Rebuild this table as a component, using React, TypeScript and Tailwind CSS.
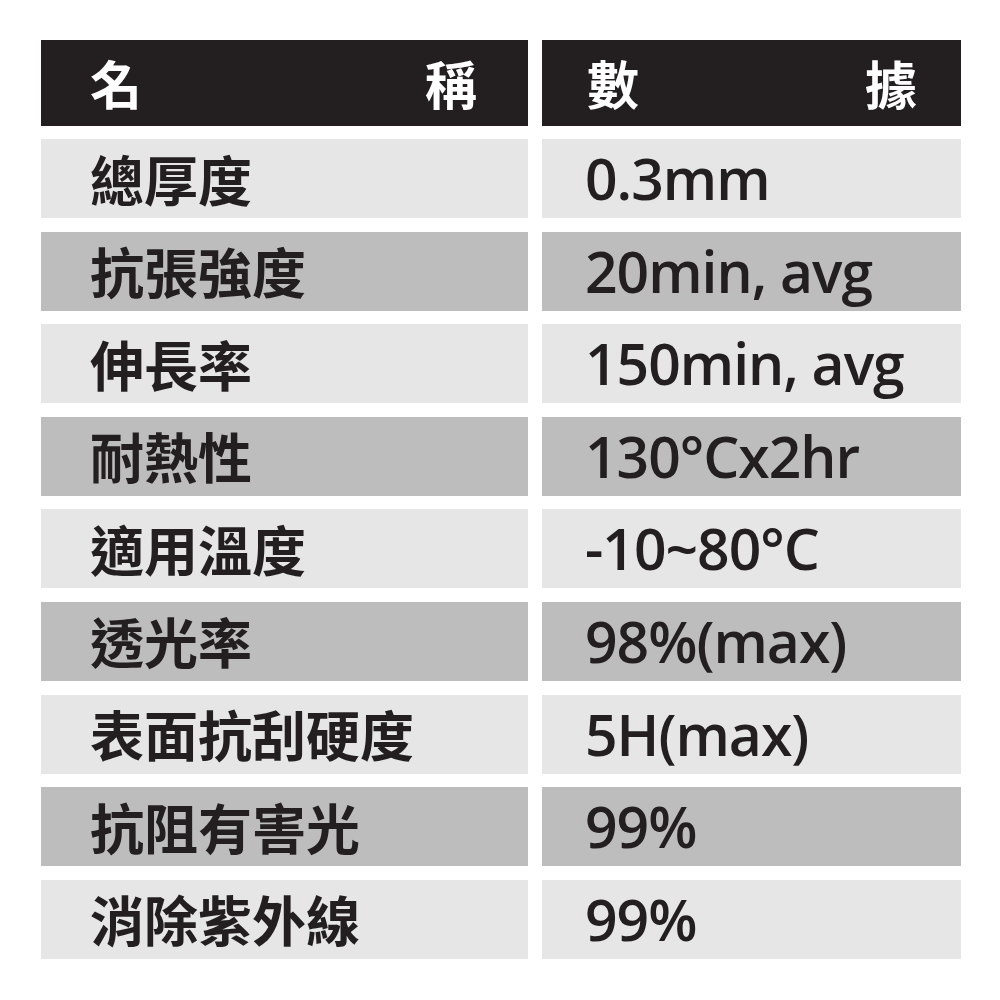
const rows: [string, string][] = [
  ['總厚度', '0.3mm'],
  ['抗張強度', '20min, avg'],
  ['伸長率', '150min, avg'],
  ['耐熱性', '130°Cx2hr'],
  ['適用溫度', '-10~80°C'],
  ['透光率', '98%(max)'],
  ['表面抗刮硬度', '5H(max)'],
  ['抗阻有害光', '99%'],
  ['消除紫外線', '99%'],
]

const cjk = { fontFamily: '"Noto Sans CJK TC", "Noto Sans", sans-serif' }
const latin = { fontFamily: '"Open Sans", "Noto Sans CJK TC", sans-serif' }

export default function App() {
  return (
    <div className="w-[1000px] h-[1000px] bg-white pt-[40px] pl-[41px]">
      <div className="w-[920px] grid grid-cols-[487px_419px] gap-x-[14px]">
        <div className="h-[86px] bg-[#231f20] flex items-center justify-between pl-[49px] pr-[51px] text-white text-[52px] font-bold" style={cjk}>
          <span>名</span>
          <span>稱</span>
        </div>
        <div className="h-[86px] bg-[#231f20] flex items-center justify-between pl-[45px] pr-[44px] text-white text-[52px] font-bold" style={cjk}>
          <span>數</span>
          <span>據</span>
        </div>
      </div>
      <div className="w-[920px] mt-[13px] grid grid-cols-[487px_419px] gap-x-[14px] gap-y-[13.6px]">
        {rows.map(([name, value], i) => {
          const bg = i % 2 === 0 ? 'bg-[#e6e6e6]' : 'bg-[#bdbdbd]'
          return (
            <div key={name} className="contents">
              <div className={`h-[79px] ${bg} flex items-center pl-[49px] text-[#231f20] text-[54px] font-bold leading-none`} style={cjk}>
                {name}
              </div>
              <div className={`h-[79px] ${bg} flex items-center pl-[43px] text-[#231f20] text-[57px] font-semibold leading-none tracking-[-1px]`} style={latin}>
                {value}
              </div>
            </div>
          )
        })}
      </div>
    </div>
  )
}
